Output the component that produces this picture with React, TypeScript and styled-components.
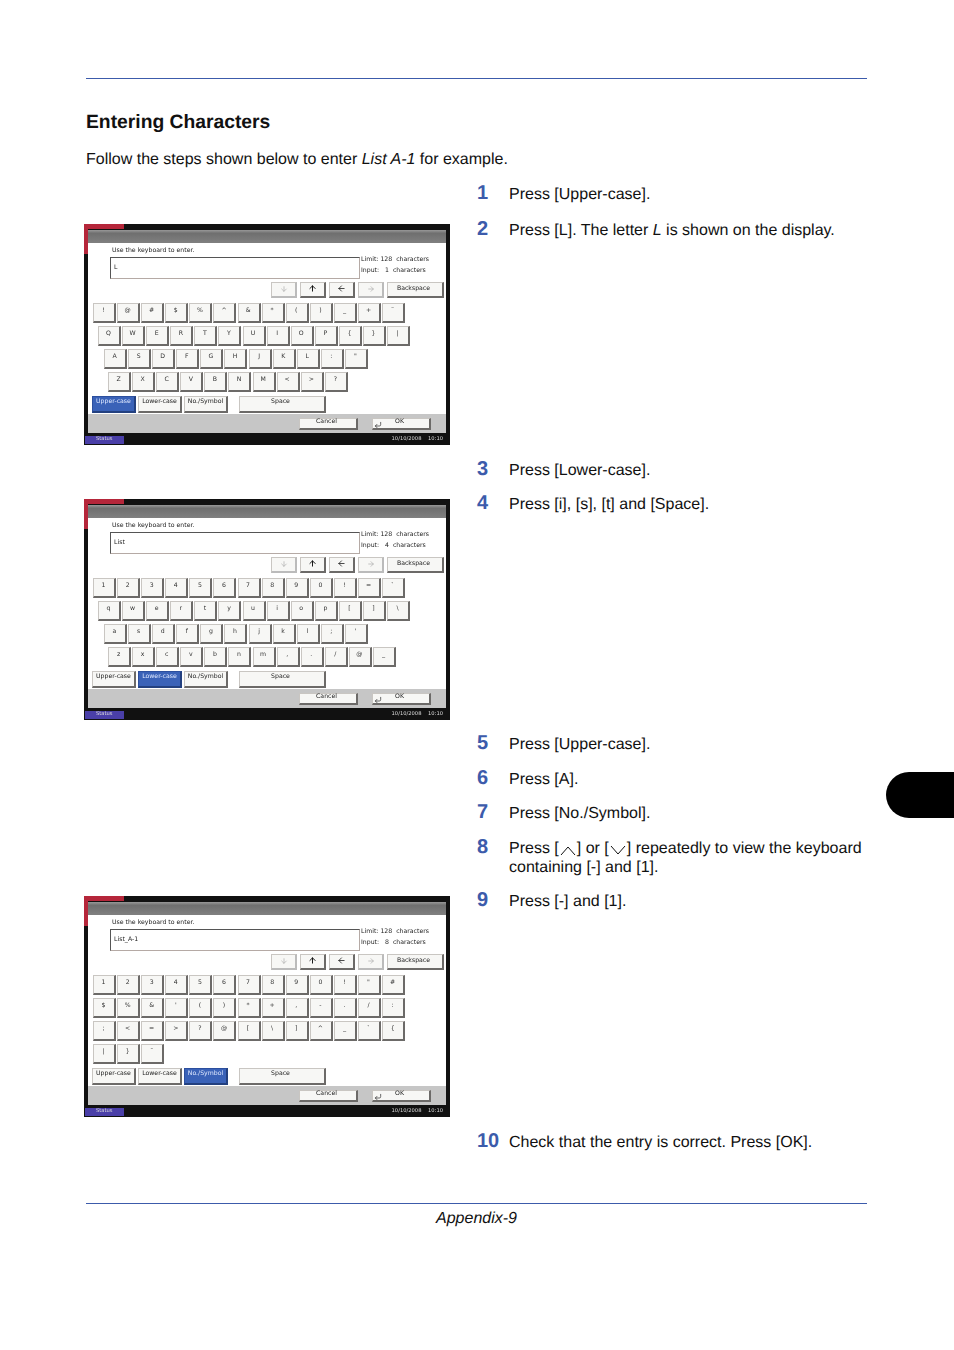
import React from "react";
import styled, { createGlobalStyle } from "styled-components";
import { ArrowDown, ArrowUp, ArrowLeft, ArrowRight, CornerDownLeft } from "lucide-react";

const Global = createGlobalStyle`
  html, body { margin: 0; padding: 0; background: #fff; }
  body { font-family: "Liberation Sans", Arial, sans-serif; color: #111; text-rendering: geometricPrecision; }
`;

const Page = styled.div`
  position: relative;
  width: 954px;
  height: 1350px;
  box-sizing: border-box;
  padding: 78px 87px 0 86px;
  overflow: hidden;
`;
const Rule = styled.hr`
  margin: 0;
  border: 0;
  height: 1px;
  background: ${(p: { $c: string }) => p.$c};
`;
const Heading = styled.h1`
  margin: 32px 0 0;
  font-size: 19.3px;
  line-height: 24px;
  font-weight: 700;
  color: #111;
`;
const Intro = styled.p`
  margin: 14.5px 0 15.5px;
  font-size: 16px;
  line-height: 19px;
`;
const Section = styled.section<{ $h: number }>`
  display: grid;
  grid-template-columns: 391px 1fr;
  height: ${(p) => p.$h}px;
`;
const ShotCell = styled.div<{ $top: number }>`
  padding-top: ${(p) => p.$top}px;
  margin-left: -2px;
`;
const Steps = styled.ol<{ $gap: number }>`
  list-style: none;
  margin: 0;
  padding: 0;
  display: flex;
  flex-direction: column;
  gap: ${(p) => p.$gap}px;
`;
const Step = styled.li`
  display: grid;
  grid-template-columns: 32px 1fr;
  align-items: baseline;
  font-size: 16px;
  line-height: 19px;
`;
const Num = styled.span`
  font-size: 20px;
  font-weight: 700;
  color: #3c5bab;
`;
const Footer = styled.footer`
  margin-top: 0;
`;
const FootText = styled.div`
  margin-top: 5px;
  text-align: center;
  font-size: 16px;
  line-height: 19px;
  font-style: italic;
`;
const ChapterTab = styled.div`
  position: absolute;
  right: 0;
  top: 772px;
  width: 68.5px;
  height: 46px;
  background: #000;
  border-radius: 23px 0 0 23px;
`;
const Chev = styled.svg`
  width: 16px;
  height: 11px;
  margin: 0 1px;
  vertical-align: -3px;
`;

/* ---- copier panel ---- */
const Frame = styled.div`
  position: relative;
  width: 366px;
  height: 221px;
  box-sizing: border-box;
  padding: 6px 4px 0 4px;
  background: #111;
  font-family: "DejaVu Sans", sans-serif;
  font-size: 6.2px;
  color: #222;
  overflow: hidden;
  display: flex;
  flex-direction: column;
  filter: blur(0.35px);
  &::before {
    content: "";
    position: absolute;
    left: 0;
    top: 0;
    width: 40px;
    height: 5px;
    background: #b5263a;
  }
  &::after {
    content: "";
    position: absolute;
    left: 0;
    top: 0;
    width: 4px;
    height: 30px;
    background: #b5263a;
  }
`;
const TitleBar = styled.div`
  height: 13px;
  background: linear-gradient(#989898, #6f6f6f 25%, #808080);
`;
const Panel = styled.div`
  height: 171px;
  background: #fff;
  display: flex;
  flex-direction: column;
`;
const Prompt = styled.div`
  height: 14px;
  line-height: 15px;
  padding-left: 24px;
  flex: none;
`;
const InputRow = styled.div`
  display: flex;
  padding-left: 22px;
  height: 22px;
  flex: none;
`;
const InputBox = styled.div`
  width: 250px;
  box-sizing: border-box;
  border: 1px solid #b5aaa5;
  border-top-color: #555;
  border-left-color: #555;
  padding-left: 3px;
  line-height: 19px;
`;
const Info = styled.div`
  margin: -2px 0 0 1px;
  line-height: 10.5px;
  white-space: pre;
`;
const NavRow = styled.div`
  display: flex;
  justify-content: flex-end;
  gap: 3px;
  margin-top: 3px;
  padding-right: 2px;
  height: 16px;
  flex: none;
`;
const Raised = styled.div`
  box-sizing: border-box;
  background: #f7f7f5;
  border: 1px solid #c9c6c2;
  border-right: 2px solid #6c6a68;
  border-bottom: 2px solid #6c6a68;
  display: flex;
  align-items: center;
  justify-content: center;
  padding-bottom: 2px;
`;
const NavBtn = styled(Raised)<{ $off?: boolean }>`
  width: 26px;
  color: ${(p) => (p.$off ? "#aaa" : "#111")};
  border-right-color: ${(p) => (p.$off ? "#bbb" : "#6c6a68")};
  border-bottom-color: ${(p) => (p.$off ? "#bbb" : "#6c6a68")};
`;
const Backspace = styled(Raised)`
  width: 57px;
  padding-right: 3px;
`;
const Keyboard = styled.div`
  margin-top: 5px;
  height: 89px;
  flex: none;
  display: flex;
  flex-direction: column;
  gap: 3px;
`;
const KeyRow = styled.div<{ $indent: number }>`
  display: flex;
  gap: 1.1px;
  padding-left: ${(p) => p.$indent}px;
`;
const Key = styled(Raised)`
  width: 23px;
  height: 20px;
  padding: 0 1px 4px 0;
  color: #333;
`;
const ModeRow = styled.div`
  margin-top: 4px;
  display: flex;
  gap: 2px;
  padding-left: 4px;
`;
const ModeBtn = styled(Raised)<{ $on?: boolean }>`
  width: 44px;
  height: 17px;
  padding-bottom: 5px;
  white-space: nowrap;
  background: ${(p) => (p.$on ? "#3a62b8" : "#f7f7f5")};
  color: ${(p) => (p.$on ? "#dfe8ff" : "#222")};
  border-color: ${(p) => (p.$on ? "#2c4f9e" : "#c9c6c2")};
  border-right-color: ${(p) => (p.$on ? "#23407f" : "#6c6a68")};
  border-bottom-color: ${(p) => (p.$on ? "#23407f" : "#6c6a68")};
`;
const SpaceBtn = styled(Raised)`
  width: 87px;
  height: 17px;
  margin-left: 9px;
  padding: 0 3px 5px 0;
`;
const ActionBar = styled.div`
  height: 19px;
  background: #c6c6c6;
  display: flex;
  padding: 4px 0 0 211px;
  box-sizing: border-box;
  gap: 14px;
  flex: none;
`;
const ActionBtn = styled(Raised)`
  width: 59px;
  height: 12px;
  padding: 0 3px 4px 0;
  position: relative;
`;
const ReturnMark = styled.span`
  position: absolute;
  left: 1px;
  top: 2px;
  display: flex;
  color: #222;
`;
const StatusBar = styled.div`
  flex: 1;
  display: flex;
  align-items: flex-start;
  justify-content: space-between;
  margin: 0 -4px;
  padding: 3px 7px 0 1px;
  color: #ddd;
  font-size: 5.2px;
  background: #111;
`;
const StatusTag = styled.div`
  width: 39px;
  height: 8px;
  line-height: 7px;
  padding-left: 11px;
  box-sizing: border-box;
  background: #4a3fa8;
  color: #ddd;
`;
const Clock = styled.div`
  white-space: pre;
`;

type ScreenProps = {
  value: string;
  count: number;
  rows: string[][];
  indents: number[];
  mode: 0 | 1 | 2;
};

const Screen = ({ value, count, rows, indents, mode }: ScreenProps) => (
  <Frame>
    <TitleBar />
    <Panel>
      <Prompt>Use the keyboard to enter.</Prompt>
      <InputRow>
        <InputBox>{value}</InputBox>
        <Info>{`Limit: 128  characters\nInput:   ${count}  characters`}</Info>
      </InputRow>
      <NavRow>
        <NavBtn $off><ArrowDown size={8} strokeWidth={2} /></NavBtn>
        <NavBtn><ArrowUp size={9} strokeWidth={2.6} /></NavBtn>
        <NavBtn><ArrowLeft size={9} strokeWidth={2} /></NavBtn>
        <NavBtn $off><ArrowRight size={8} strokeWidth={2} /></NavBtn>
        <Backspace>Backspace</Backspace>
      </NavRow>
      <Keyboard>
        {rows.map((r, i) => (
          <KeyRow key={i} $indent={indents[i]}>
            {r.map((k, j) => <Key key={j}>{k}</Key>)}
          </KeyRow>
        ))}
      </Keyboard>
      <ModeRow>
        <ModeBtn $on={mode === 0}>Upper-case</ModeBtn>
        <ModeBtn $on={mode === 1}>Lower-case</ModeBtn>
        <ModeBtn $on={mode === 2}>No./Symbol</ModeBtn>
        <SpaceBtn>Space</SpaceBtn>
      </ModeRow>
    </Panel>
    <ActionBar>
      <ActionBtn>Cancel</ActionBtn>
      <ActionBtn>
        <ReturnMark><CornerDownLeft size={8} strokeWidth={2} /></ReturnMark>
        OK
      </ActionBtn>
    </ActionBar>
    <StatusBar>
      <StatusTag>Status</StatusTag>
      <Clock>{"10/10/2008    10:10"}</Clock>
    </StatusBar>
  </Frame>
);

const split = (s: string) => s.split(" ");
const upper = [
  "! @ # $ % ^ & * ( ) _ + ˜",
  "Q W E R T Y U I O P { } |",
  "A S D F G H J K L : \"",
  "Z X C V B N M < > ?",
].map(split);
const lower = [
  "1 2 3 4 5 6 7 8 9 0 ! = `",
  "q w e r t y u i o p [ ] \\",
  "a s d f g h j k l ; '",
  "z x c v b n m , . / @ _",
].map(split);
const symbol = [
  "1 2 3 4 5 6 7 8 9 0 ! \" #",
  "$ % & ' ( ) * + , - . / :",
  "; < = > ? @ [ \\ ] ^ _ ` {",
  "| } ˜",
].map(split);
const staggered = [5, 10, 16, 20];
const flush = [5, 5, 5, 5];

const ChevUp = () => (
  <Chev viewBox="0 0 16 11"><path d="M1 10 L8 2 L15 10" fill="none" stroke="#111" strokeWidth="1" /></Chev>
);
const ChevDown = () => (
  <Chev viewBox="0 0 16 11"><path d="M1 1 L8 9 L15 1" fill="none" stroke="#111" strokeWidth="1" /></Chev>
);

export default function App() {
  return (
    <Page>
      <Global />
      <Rule $c="#3c5bab" />
      <Heading>Entering Characters</Heading>
      <Intro>Follow the steps shown below to enter <i>List A-1</i> for example.</Intro>

      <Section $h={276}>
        <ShotCell $top={40}>
          <Screen value="L" count={1} rows={upper} indents={staggered} mode={0} />
        </ShotCell>
        <Steps $gap={15.5}>
          <Step><Num>1</Num><span>Press [Upper-case].</span></Step>
          <Step><Num>2</Num><span>Press [L]. The letter <i>L</i> is shown on the display.</span></Step>
        </Steps>
      </Section>

      <Section $h={274}>
        <ShotCell $top={39}>
          <Screen value="List" count={4} rows={lower} indents={staggered} mode={1} />
        </ShotCell>
        <Steps $gap={14}>
          <Step><Num>3</Num><span>Press [Lower-case].</span></Step>
          <Step><Num>4</Num><span>Press [i], [s], [t] and [Space].</span></Step>
        </Steps>
      </Section>

      <Section $h={398}>
        <ShotCell $top={162}>
          <Screen value="List_A-1" count={8} rows={symbol} indents={flush} mode={2} />
        </ShotCell>
        <Steps $gap={14.5}>
          <Step><Num>5</Num><span>Press [Upper-case].</span></Step>
          <Step><Num>6</Num><span>Press [A].</span></Step>
          <Step><Num>7</Num><span>Press [No./Symbol].</span></Step>
          <Step><Num>8</Num><span>Press [<ChevUp />] or [<ChevDown />] repeatedly to view the keyboard containing [-] and [1].</span></Step>
          <Step><Num>9</Num><span>Press [-] and [1].</span></Step>
        </Steps>
      </Section>

      <Section $h={71}>
        <div />
        <Steps $gap={15}>
          <Step><Num>10</Num><span>Check that the entry is correct. Press [OK].</span></Step>
        </Steps>
      </Section>

      <Footer>
        <Rule $c="#3c5bab" />
        <FootText>Appendix-9</FootText>
      </Footer>
      <ChapterTab />
    </Page>
  );
}
